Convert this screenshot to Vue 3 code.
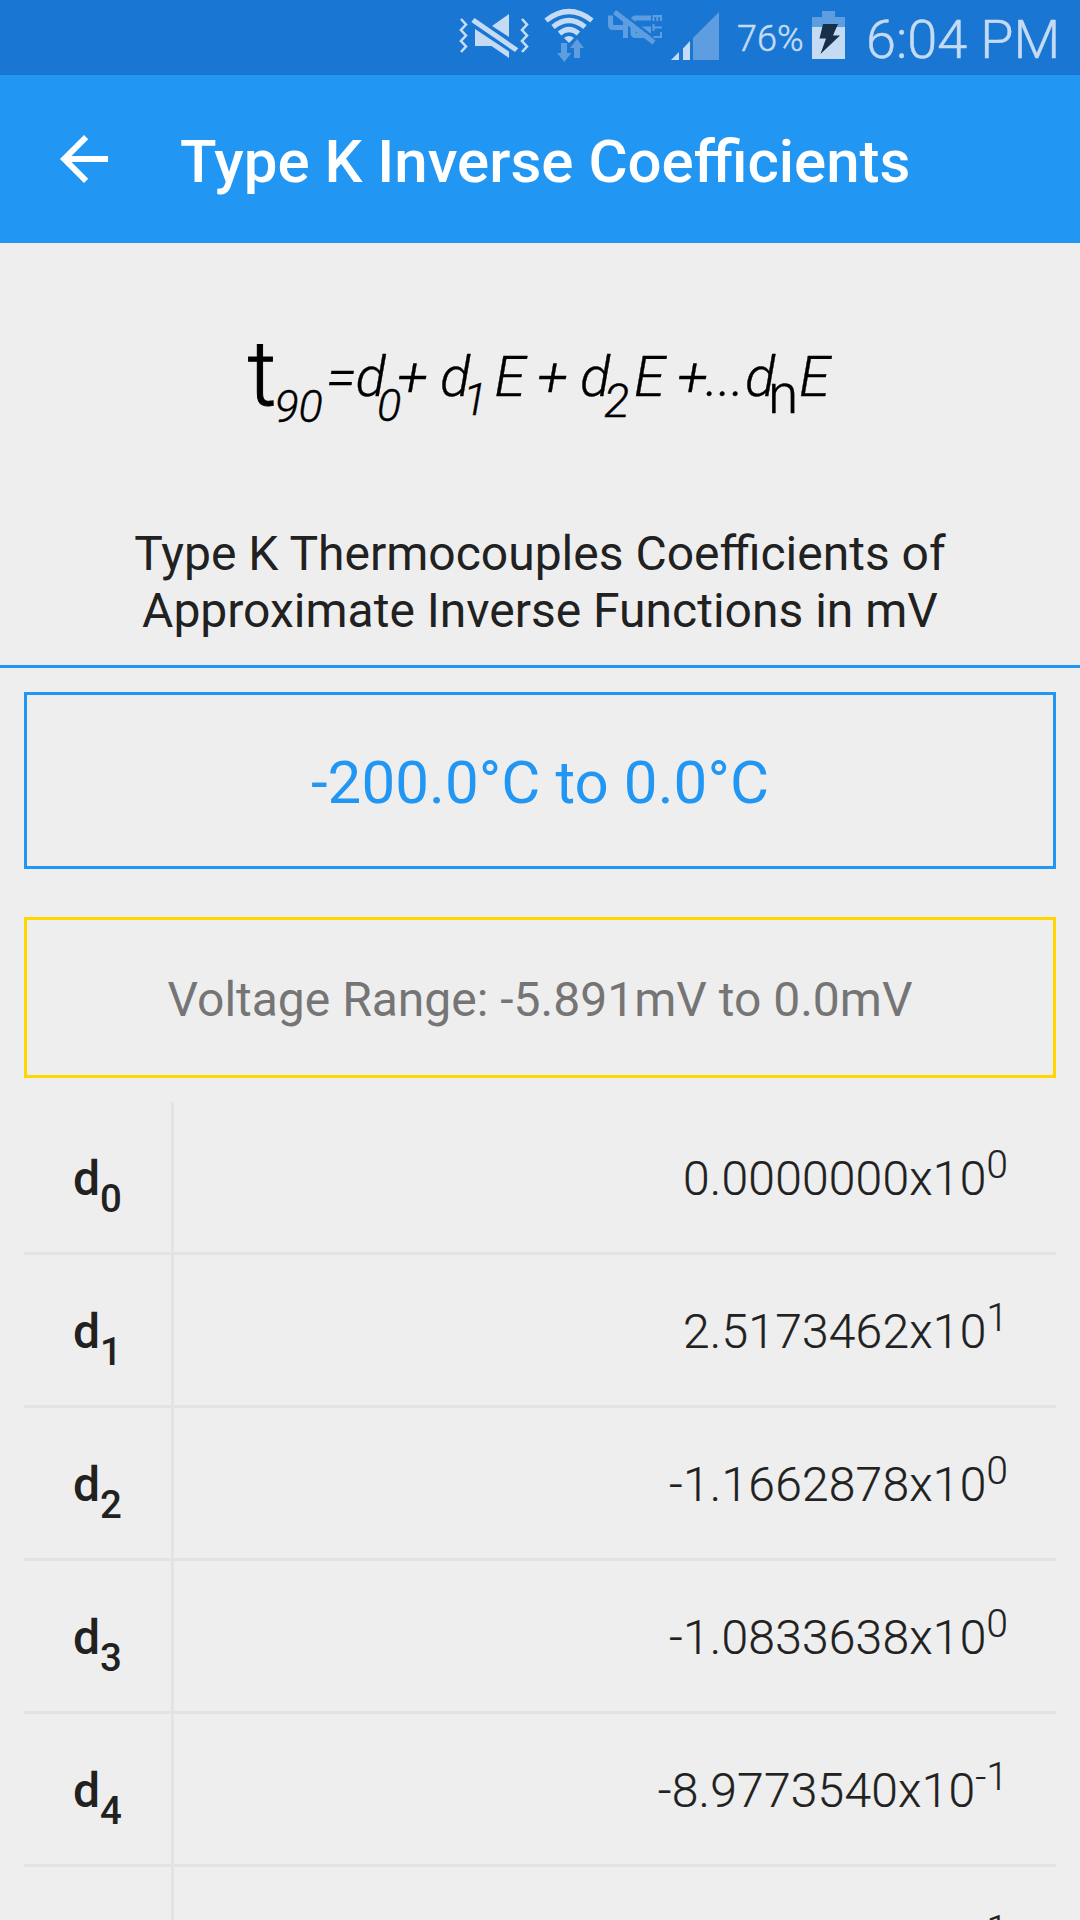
<template>
  <div class="screen">
    <div class="status-bar">
      <svg class="status-icons" width="284" height="75" viewBox="440 0 284 75">
        <!-- mute + vibrate -->
        <g fill="none" stroke="#c5dbf4" stroke-width="2.6">
          <path d="M461 19l5 5.500-5 5.500 5 5.500-5 5.500 5 5.500-5 5.500" />
          <path d="M522 19l5 5.500-5 5.500 5 5.500-5 5.500 5 5.500-5 5.500" />
        </g>
        <g fill="#c5dbf4">
          <path d="M475 29L509 51.500V58L491.500 46H475z" />
          <path d="M509 14V37L492 26z" />
          <path d="M474.500 18L518.300 48.300L515 52L471.300 22z" />
        </g>
        <!-- wifi -->
        <g fill="none" stroke="#c5dbf4" stroke-width="5.200">
          <path d="M546 20.500Q569 2.500 592 20.500" />
          <path d="M553 27Q569 14 585 27" />
          <path d="M559.500 33.500Q569 25.500 578.500 33.500" />
        </g>
        <path fill="#c5dbf4" d="M564 38Q569 34 574 38L569 43z" />
        <g fill="#5e9ee0">
          <path d="M561 43h6v10h4.300L564.300 62L557 53h4z" />
          <path d="M577 39l7 9h-4v10h-6V48h-4z" />
        </g>
        <!-- 4G off -->
        <g fill="none" stroke="#5e9ee0">
          <path stroke-width="5" d="M610.500 15.500V25Q610.500 27.500 613 27.500H625M625.500 20V38M651 18H636Q633 18 633 21V32.500Q633 35.500 636 35.500H648.500V29H641" />
          <path stroke-width="2.500" stroke="#1976d2" d="M617 9L657 40" />
          <path stroke-width="5" d="M614.500 12L654 42.500" />
          <path stroke-width="2" d="M653.500 21V16H661V21M657.300 16V21M653.500 24V31M653.500 27.500H662M653.500 37H661V32" />
        </g>
        <!-- signal -->
        <path fill="#5e9ee0" d="M693 38L719 12V60H693z" />
        <path fill="#c5dbf4" d="M671 60L679 52V60zM683 48.500L690 41V60H683z" />
      </svg>
      <span class="battery-level">76%</span>
      <svg class="battery" width="33" height="48" viewBox="0 0 33 48">
        <path fill="#5e9ee0" d="M10 0h13v6h10v10H0V6h10z" />
        <path fill="#c5dbf4" d="M0 16h33v32H0z" />
        <path fill="#172f48" d="M11 13H26L21 24.500H28L8.500 43L14 27.500H7.500z" />
      </svg>
      <span class="clock">6:04 PM</span>
    </div>

    <header class="app-bar">
      <svg class="back" width="48" height="48" viewBox="0 0 48 48">
        <path fill="#fff" d="M48 21H11.500L28.200 4.200L24 0L0 24L24 48L28.200 43.800L11.500 27H48z" />
      </svg>
      <h1>Type K Inverse Coefficients</h1>
    </header>

    <svg class="formula" width="1080" height="240" viewBox="0 243 1080 240">
      <text
        v-for="(part, index) in formula"
        :key="index"
        :x="part.x"
        :y="part.y"
        :font-size="part.size"
        :class="{ upright: part.upright, heavy: part.heavy }"
      >{{ part.text }}</text>
    </svg>

    <h2>Type K Thermocouples Coefficients of<br />Approximate Inverse Functions in mV</h2>

    <div class="content">
      <div class="temperature">-200.0°C to 0.0°C</div>
      <div class="voltage">Voltage Range: -5.891mV to 0.0mV</div>

      <div class="coefficients">
        <div v-for="(row, index) in coefficients" :key="index" class="row">
          <div class="name">d<sub>{{ index }}</sub></div>
          <div class="value">{{ row.value }}x10<sup>{{ row.exponent }}</sup></div>
        </div>
      </div>
    </div>
  </div>
</template>

<script setup>
const formula = [
  { text: 't', x: 247.5, y: 404.5, size: 90, upright: true, heavy: true },
  { text: '9', x: 274.5, y: 421.5, size: 45 },
  { text: '0', x: 298.5, y: 421.5, size: 45 },
  { text: '=', x: 326, y: 395.5, size: 56 },
  { text: 'd', x: 355.5, y: 395.5, size: 56 },
  { text: '0', x: 377, y: 420.5, size: 45 },
  { text: '+', x: 397, y: 395.5, size: 56 },
  { text: 'd', x: 440, y: 395.5, size: 56 },
  { text: '1', x: 463, y: 415, size: 45 },
  { text: 'E', x: 494.5, y: 395.5, size: 56 },
  { text: '+', x: 537, y: 395.5, size: 56 },
  { text: 'd', x: 580, y: 395.5, size: 56 },
  { text: '2', x: 604, y: 416.5, size: 47 },
  { text: 'E', x: 634, y: 395.5, size: 56 },
  { text: '+', x: 677, y: 395.5, size: 56 },
  { text: '...', x: 705.5, y: 395.5, size: 56 },
  { text: 'd', x: 745, y: 395.5, size: 56 },
  { text: 'n', x: 768, y: 413, size: 55, upright: true },
  { text: 'E', x: 799, y: 395.5, size: 56 },
]

const coefficients = [
  { value: '0.0000000', exponent: 0 },
  { value: '2.5173462', exponent: 1 },
  { value: '-1.1662878', exponent: 0 },
  { value: '-1.0833638', exponent: 0 },
  { value: '-8.9773540', exponent: -1 },
  { value: '-3.7342377', exponent: -1 },
]
</script>

<style>
body {
  background: #eeeeee;
}
</style>

<style scoped>
.screen {
  height: 1920px;
  overflow: hidden;
  background: #eeeeee;
  color: #212121;
  font-family: Roboto, sans-serif;
}

.status-bar {
  display: flex;
  height: 75px;
  padding-left: 440px;
  background: #1976d2;
  color: #c5dbf4;
}

.status-icons {
  flex: none;
}

.battery-level {
  width: 88px;
  padding-left: 13px;
  font-size: 36px;
  line-height: 78px;
  font-weight: 300;
  -webkit-text-stroke: 0.5px #c5dbf4;
}

.battery {
  flex: none;
  margin: 11px 21px 0 -13px;
}

.clock {
  font-size: 54px;
  line-height: 79px;
  font-weight: 300;
  white-space: nowrap;
  -webkit-text-stroke: 0.5px #c5dbf4;
}

.app-bar {
  display: flex;
  align-items: center;
  height: 168px;
  background: #2196f3;
  color: #fff;
}

.back {
  margin: 0 72px 0 60px;
}

h1 {
  margin: 0;
  padding-top: 5px;
  font-size: 60px;
  line-height: 72px;
  font-weight: 500;
}

.formula {
  display: block;
  fill: #000;
  stroke: #000;
  stroke-width: 0.4px;
  font-weight: 300;
  font-style: italic;
}

.upright {
  font-style: normal;
}

.heavy {
  stroke-width: 1px;
}

h2 {
  box-sizing: border-box;
  height: 185px;
  margin: 0;
  padding-top: 42px;
  border-bottom: 3px solid #2196f3;
  font-size: 48px;
  line-height: 57px;
  font-weight: 400;
  text-align: center;
}

.content {
  padding: 24px;
}

.temperature,
.voltage {
  box-sizing: border-box;
  text-align: center;
}

.temperature {
  height: 177px;
  border: 3px solid #2196f3;
  color: #2196f3;
  font-size: 60px;
  line-height: 175px;
  letter-spacing: 0.1px;
}

.voltage {
  height: 161px;
  margin: 48px 0 24px;
  border: 3px solid #ffd600;
  color: #757575;
  font-size: 48px;
  line-height: 159px;
}

.row {
  box-sizing: border-box;
  display: flex;
  height: 153px;
  border-bottom: 3px solid #e3e3e3;
  font-size: 48px;
  line-height: 154px;
}

.name {
  box-sizing: border-box;
  width: 150px;
  height: 153px;
  padding-left: 49px;
  border-right: 3px solid #e3e3e3;
  font-weight: 500;
}

.value {
  flex: 1;
  padding-right: 48px;
  font-weight: 300;
  text-align: right;
  letter-spacing: 0.2px;
  -webkit-text-stroke: 0.2px #212121;
}

sub,
sup {
  position: relative;
  font-size: 38.4px;
  line-height: 0;
  vertical-align: baseline;
}

sub {
  top: 17px;
}

sup {
  top: -17px;
}
</style>
